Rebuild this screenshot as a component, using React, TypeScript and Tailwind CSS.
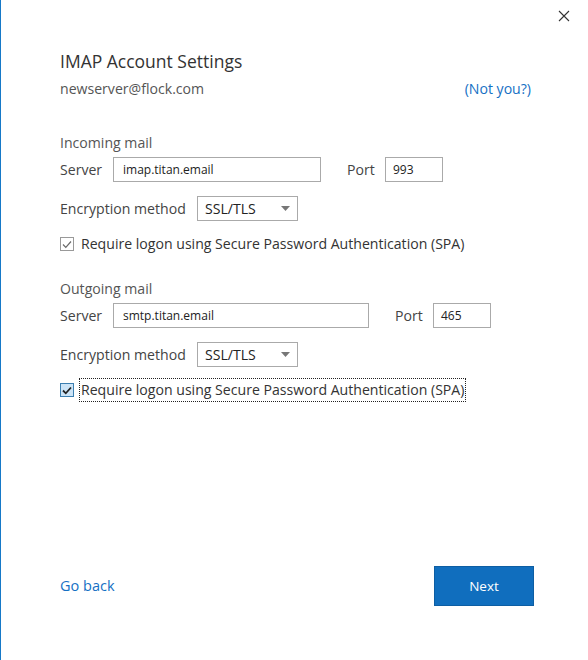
import React from 'react';

const font = { fontFamily: '"Open Sans", "Noto Sans", sans-serif' };

function Check({ focused }: { focused?: boolean }) {
  return (
    <div className="flex items-center h-[24px]">
      <div
        className={`w-[14px] h-[14px] border flex items-center justify-center ${
          focused ? 'bg-[#cce4f7] border-[#3c7fb1]' : 'bg-white border-[#999]'
        }`}
      >
        <svg width="10" height="9" viewBox="0 0 10 9">
          <path
            d="M1 4.5 L3.8 7.3 L9 1.5"
            fill="none"
            stroke={focused ? '#222' : '#6a6a6a'}
            strokeWidth={focused ? 1.8 : 1.2}
          />
        </svg>
      </div>
      <span
        className={`ml-[5px] text-[14.1px] text-[#333] px-[1px] leading-[22px] ${
          focused ? 'border border-dotted border-[#222]' : 'border border-transparent'
        }`}
      >
        Require logon using Secure Password Authentication (SPA)
      </span>
    </div>
  );
}

function Section({ title, server, port, serverW }: { title: string; server: string; port: string; serverW: string }) {
  return (
    <div className="flex flex-col">
      <div className="text-[14.1px] text-[#555] leading-[20px]">{title}</div>
      <div className="flex items-center mt-[4px] h-[25px]">
        <span className="text-[14.1px] text-[#444] w-[53px]">Server</span>
        <div className={`${serverW} h-[25px] border border-[#aaa] flex items-center px-[9px] text-[12px] text-[#222]`}>
          {server}
        </div>
        <span className="text-[14.1px] text-[#444] ml-[26px] w-[38px]">Port</span>
        <div className="w-[58px] h-[25px] border border-[#aaa] flex items-center px-[7px] text-[12px] text-[#222]">
          {port}
        </div>
      </div>
      <div className="flex items-center mt-[14px] h-[25px]">
        <span className="text-[14.1px] text-[#444] w-[137px]">Encryption method</span>
        <div className="w-[101px] h-[25px] border border-[#aaa] flex items-center justify-between pl-[7px] pr-[7px] text-[14.1px] text-[#222]">
          <span>SSL/TLS</span>
          <svg width="9" height="5" viewBox="0 0 9 5">
            <path d="M0 0 H9 L4.5 5 Z" fill="#777" />
          </svg>
        </div>
      </div>
    </div>
  );
}

export default function App() {
  return (
    <div style={font} className="w-[588px] h-[660px] bg-white border-l border-[#1679c8] relative flex flex-col">
      <button className="absolute top-[8px] right-[16px] w-[16px] h-[16px] flex items-center justify-center">
        <svg width="12" height="12" viewBox="0 0 12 12">
          <path d="M1 1 L11 11 M11 1 L1 11" stroke="#333" strokeWidth="1.1" />
        </svg>
      </button>

      <div className="pl-[59px] pr-[54px] pt-[48px] flex flex-col flex-1">
        <h1 className="text-[17.5px] text-[#333] leading-[26px]">IMAP Account Settings</h1>
        <div className="flex justify-between mt-[5px] text-[14.1px] leading-[20px] pr-[3px]">
          <span className="text-[#555]">newserver@flock.com</span>
          <a className="text-[#1570c4]">(Not you?)</a>
        </div>

        <div className="mt-[34px]">
          <Section title="Incoming mail" server="imap.titan.email" port="993" serverW="w-[208px]" />
        </div>
        <div className="mt-[11px]">
          <Check />
        </div>

        <div className="mt-[23px]">
          <Section title="Outgoing mail" server="smtp.titan.email" port="465" serverW="w-[256px]" />
        </div>
        <div className="mt-[11px]">
          <Check focused />
        </div>

        <div className="mt-auto mb-[54px] flex items-center justify-between">
          <a className="text-[14.5px] text-[#1570c4]">Go back</a>
          <button className="w-[100px] h-[40px] bg-[#106ebe] border border-[#0d5ea3] text-white text-[13.5px]">
            Next
          </button>
        </div>
      </div>
    </div>
  );
}
